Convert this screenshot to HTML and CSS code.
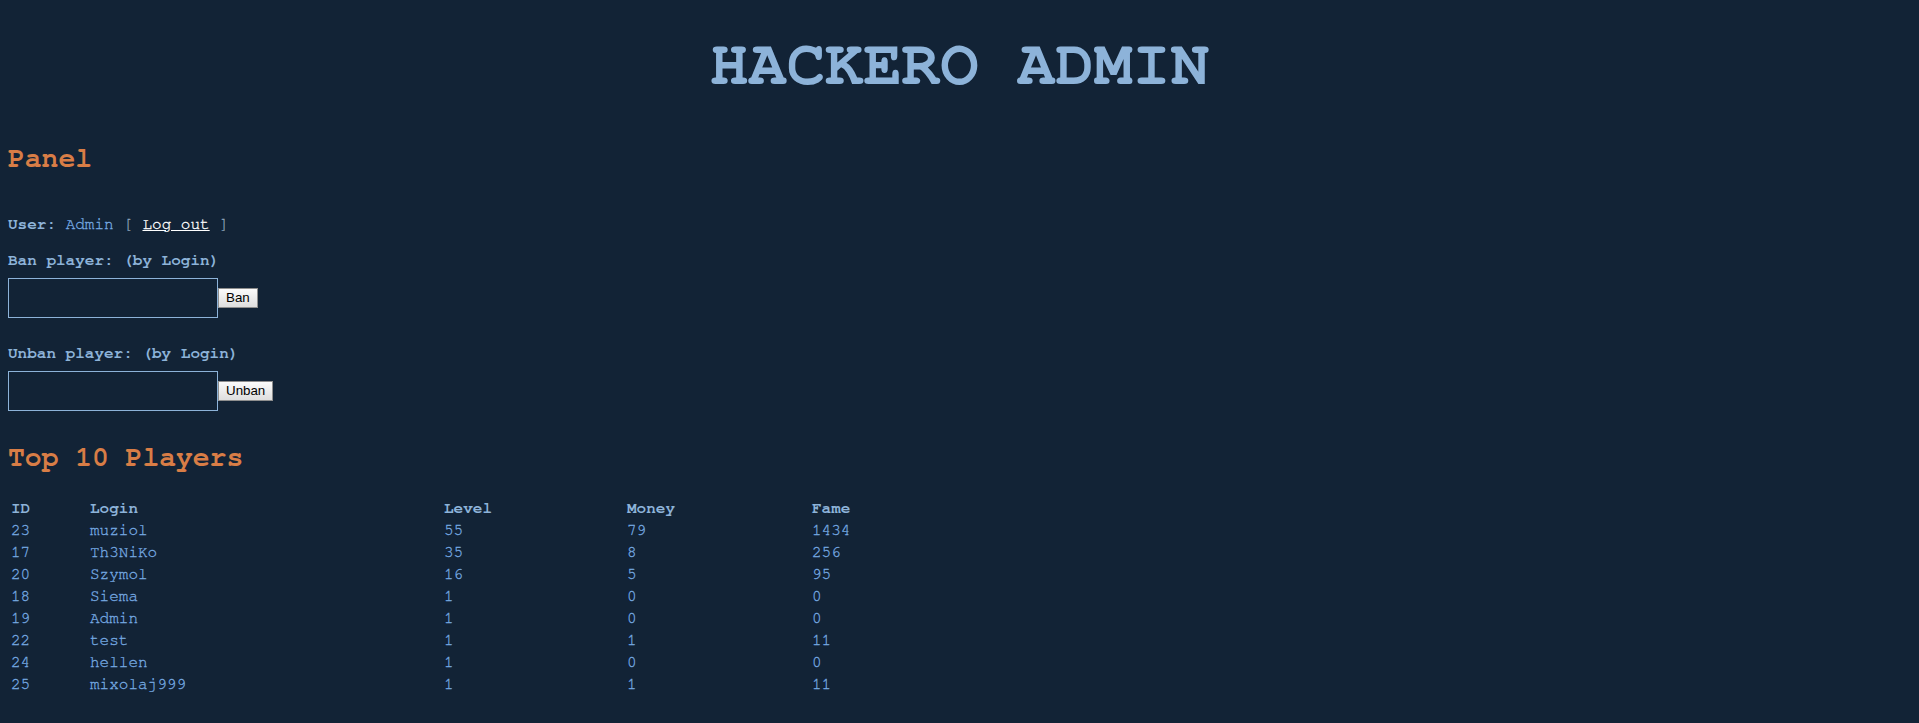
FILE: index.html
```html
<!DOCTYPE html>
<html>
<head>
<meta charset="utf-8">
<title>Hackero Admin</title>
<link rel="stylesheet" href="styles.css">
</head>
<body>
<h1 class="title">HACKERO ADMIN</h1>
<h2 class="section section-panel">Panel</h2>
<p class="user-line"><span class="label">User:</span> <span class="value">Admin</span> <span class="bracket">[</span> <a class="logout" href="#">Log out</a> <span class="bracket">]</span></p>
<p class="label form-label first-label">Ban player: (by Login)</p>
<form class="form-row">
  <input class="text-input" type="text">
  <button class="btn" type="button">Ban</button>
</form>
<p class="label form-label second-label">Unban player: (by Login)</p>
<form class="form-row">
  <input class="text-input" type="text">
  <button class="btn" type="button">Unban</button>
</form>
<h2 class="section section-top">Top 10 Players</h2>
<table class="players">
  <thead>
    <tr><th class="c-id">ID</th><th class="c-login">Login</th><th class="c-level">Level</th><th class="c-money">Money</th><th class="c-fame">Fame</th></tr>
  </thead>
  <tbody>
    <tr><td>23</td><td>muziol</td><td>55</td><td>79</td><td>1434</td></tr>
    <tr><td>17</td><td>Th3NiKo</td><td>35</td><td>8</td><td>256</td></tr>
    <tr><td>20</td><td>Szymol</td><td>16</td><td>5</td><td>95</td></tr>
    <tr><td>18</td><td>Siema</td><td>1</td><td>0</td><td>0</td></tr>
    <tr><td>19</td><td>Admin</td><td>1</td><td>0</td><td>0</td></tr>
    <tr><td>22</td><td>test</td><td>1</td><td>1</td><td>11</td></tr>
    <tr><td>24</td><td>hellen</td><td>1</td><td>0</td><td>0</td></tr>
    <tr><td>25</td><td>mixolaj999</td><td>1</td><td>1</td><td>11</td></tr>
  </tbody>
</table>
</body>
</html>
```
FILE: styles.css
```css
html, body {
  background: #122336;
}
body {
  margin: 0;
  padding: 8px;
  font-family: "Nimbus Mono PS", "Nimbus Mono L", "FreeMono", "Courier", "Liberation Mono", monospace;
  font-size: 16px;
  line-height: 18px;
  color: #76aae2;
}
.title {
  margin: 21px 0 0;
  font-size: 64px;
  line-height: 72px;
  font-weight: bold;
  text-align: center;
  color: #8db3d9;
}
.section {
  margin: 0;
  font-size: 28px;
  line-height: 32px;
  font-weight: bold;
  color: #d87d46;
}
.section-panel {
  margin-top: 42px;
}
.section-top {
  margin-top: 31px;
}
.user-line {
  margin: 40px 0 0;
}
.label {
  font-weight: bold;
  color: #8db3d9;
}
.value {
  color: #76aae2;
  -webkit-text-stroke: 0.3px #76aae2;
}
.bracket {
  color: #8fa3bb;
  -webkit-text-stroke: 0.3px #8fa3bb;
}
.logout {
  color: #ffffff;
  text-decoration: underline;
  -webkit-text-stroke: 0.3px #ffffff;
}
.form-label {
  margin: 0;
}
.first-label {
  margin-top: 18px;
}
.second-label {
  margin-top: 26px;
}
.form-row {
  display: flex;
  align-items: center;
  margin: 9px 0 0;
}
.text-input {
  box-sizing: border-box;
  width: 210px;
  height: 40px;
  margin: 0;
  padding: 0 4px;
  border: 1px solid #8db3d9;
  background: transparent;
  color: #8db3d9;
  outline: none;
}
.btn {
  box-sizing: border-box;
  height: 20px;
  margin: 0;
  padding: 0 7px;
  border: 1px solid #8e8e8e;
  border-radius: 0;
  background: linear-gradient(#fbfbfb, #dedede);
  font-family: "Liberation Sans", Arial, sans-serif;
  font-size: 13.33px;
  line-height: 16px;
  color: #000;
}
.players {
  margin-top: 22px;
  border-collapse: separate;
  border-spacing: 2px;
  table-layout: fixed;
  width: 953px;
}
.players th,
.players td {
  box-sizing: border-box;
  padding: 1px;
  text-align: left;
  line-height: 18px;
  font-size: 16px;
  white-space: nowrap;
}
.players th {
  font-weight: bold;
  color: #8db3d9;
}
.players td {
  color: #76aae2;
  -webkit-text-stroke: 0.3px #76aae2;
}
.c-id { width: 77px; }
.c-login { width: 352px; }
.c-level { width: 181px; }
.c-money { width: 183px; }
.c-fame { width: 148px; }
```
